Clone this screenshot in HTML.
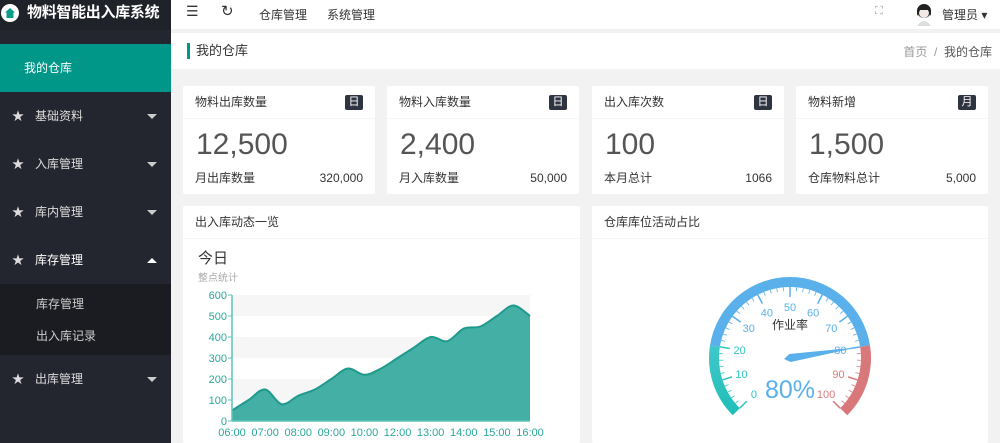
<!DOCTYPE html>
<html><head><meta charset="utf-8"><style>
*{margin:0;padding:0;box-sizing:border-box}
body{width:1000px;height:443px;overflow:hidden;background:#f2f2f2;font-family:"Liberation Sans","Noto Sans CJK SC",sans-serif;font-size:12px;color:#333;position:relative}
.side{position:absolute;left:0;top:0;width:171px;height:443px;background:#23262e}
.logo{height:30px;background:#20222a;color:#fff;font-size:15px;font-weight:bold;line-height:26px;padding-left:27px;position:relative;white-space:nowrap;letter-spacing:-0.3px}
.logo i{position:absolute;left:1px;top:4px;width:18px;height:18px;border-radius:50%;background:#fff}
.logo i:after{content:"";position:absolute;left:4px;top:4px;width:10px;height:10px;background:#0a9c86;clip-path:polygon(50% 0,100% 45%,85% 45%,85% 100%,15% 100%,15% 45%,0 45%)}
.act{position:absolute;top:44px;left:0;width:171px;height:48px;background:#009688;color:#fff;line-height:48px;padding-left:24px;font-size:12px}
.mi{position:absolute;left:0;width:171px;height:48px;line-height:48px;color:#ddd;padding-left:35px;font-size:12px}
.mi:before{content:"★";position:absolute;left:12px;font-size:12px;color:#ddd}
.mi:after{content:"";position:absolute;right:14px;top:22px;border:5px solid transparent;border-top:5px solid #ccc;border-bottom:0}
.mi.up{color:#fff}.mi.up:after{border-top:0;border-bottom:5px solid #fff}
.sub{position:absolute;left:0;top:284px;width:171px;height:71px;background:#1b1c22}
.sub div{height:32px;line-height:32px;padding-left:36px;color:#ccc}
.top{position:absolute;left:171px;top:0;right:0;height:30px;background:#fff;border-bottom:1px solid #f0f0f0}
.top span{position:absolute;top:6px;font-size:12px;color:#333}
.bc{position:absolute;left:171px;top:33px;right:0;height:36px;background:#fff}
.bc .t{position:absolute;left:16px;top:10px;border-left:3px solid #009688;padding-left:6px;font-size:13px;line-height:16px}
.bc .r{position:absolute;right:8px;top:10px;color:#999}
.card{position:absolute;background:#fff;border-radius:2px}
.card .h{height:33px;line-height:33px;padding-left:12px;border-bottom:1px solid #f6f6f6;color:#333;position:relative}
.card .b{position:absolute;right:12px;top:9px;width:18px;height:15px;background:#2f3540;color:#fff;font-size:11px;line-height:15px;text-align:center;border-radius:2px}
.num{position:absolute;left:13px;top:42px;font-size:30px;color:#555}
.ft{position:absolute;left:12px;right:12px;top:84px;font-size:12px;display:flex;justify-content:space-between;align-items:baseline;line-height:16px}
.ft b{font-weight:normal}
</style></head><body>
<div class="side">
<div class="logo"><i></i>物料智能出入库系统</div>
<div class="act">我的仓库</div>
<div class="mi" style="top:92px">基础资料</div>
<div class="mi" style="top:140px">入库管理</div>
<div class="mi" style="top:188px">库内管理</div>
<div class="mi up" style="top:236px">库存管理</div>
<div class="sub"><div style="margin-top:4px">库存管理</div><div>出入库记录</div></div>
<div class="mi" style="top:355px">出库管理</div>
</div>
<div class="top">
<span style="left:15px;top:3px;font-size:14px">☰</span>
<span style="left:50px;top:2px;font-size:15px">↻</span>
<span style="left:88px">仓库管理</span><span style="left:156px">系统管理</span>
<span style="left:704px;top:5px;color:#999;font-size:11px">⛶</span>
<svg style="position:absolute;left:742px;top:2px" width="22" height="24" viewBox="0 0 22 24"><circle cx="11" cy="9" r="7" fill="#222"/><ellipse cx="11" cy="11" rx="5" ry="5" fill="#f3e9e4"/><path d="M4 24 Q11 14 18 24Z" fill="#ddd"/><path d="M4 8 Q11 0 18 8 L18 14 L15 8 L7 8 L4 14Z" fill="#222"/></svg>
<span style="left:771px">管理员 ▾</span>
</div>
<div class="bc"><div class="t">我的仓库</div><div class="r">首页 &nbsp;/&nbsp; <span style="color:#555">我的仓库</span></div></div>

<div class="card" style="left:183px;top:86px;width:192px;height:108px"><div class="h">物料出库数量<span class="b">日</span></div><div class="num">12,500</div><div class="ft"><span>月出库数量</span><b>320,000</b></div></div>
<div class="card" style="left:387px;top:86px;width:192px;height:108px"><div class="h">物料入库数量<span class="b">日</span></div><div class="num">2,400</div><div class="ft"><span>月入库数量</span><b>50,000</b></div></div>
<div class="card" style="left:592px;top:86px;width:192px;height:108px"><div class="h">出入库次数<span class="b">日</span></div><div class="num">100</div><div class="ft"><span>本月总计</span><b>1066</b></div></div>
<div class="card" style="left:796px;top:86px;width:192px;height:108px"><div class="h">物料新增<span class="b">月</span></div><div class="num">1,500</div><div class="ft"><span>仓库物料总计</span><b>5,000</b></div></div>

<div class="card" style="left:183px;top:206px;width:397px;height:237px"><div class="h">出入库动态一览</div></div>
<div class="card" style="left:592px;top:206px;width:396px;height:237px"><div class="h">仓库库位活动占比</div></div>

<svg id="ch" style="position:absolute;left:0;top:0" width="1000" height="443">
<text x="198" y="263" font-size="15" fill="#333" font-family="Liberation Sans,Noto Sans CJK SC,sans-serif">今日</text>
<text x="198" y="281" font-size="10" fill="#aaa" font-family="Liberation Sans,Noto Sans CJK SC,sans-serif">整点统计</text>
<g id="cg"></g>
<g id="gg"></g>
</svg>
<script>
var ns="http://www.w3.org/2000/svg";
function el(p,t,a,txt){var e=document.createElementNS(ns,t);for(var k in a)e.setAttribute(k,a[k]);if(txt!=null)e.textContent=txt;p.appendChild(e);return e;}
var cg=document.getElementById("cg");
var x0=232,x1=530,y0=421,sc=0.21;
for(var i=0;i<6;i++){var ya=y0-(i+1)*100*sc;if(i%2==1)el(cg,"rect",{x:x0,y:ya,width:x1-x0,height:100*sc,fill:"#f6f6f6"});}
var v=[50,100,150,80,120,150,200,250,220,250,300,350,400,380,440,450,500,550,500];
var P=v.map(function(d,i){return [x0+i*(x1-x0)/18,y0-d*sc]});
var d="M"+P[0][0]+","+P[0][1];
for(var i=0;i<P.length-1;i++){var p0=P[Math.max(i-1,0)],p1=P[i],p2=P[i+1],p3=P[Math.min(i+2,P.length-1)];
d+=" C"+(p1[0]+(p2[0]-p0[0])/6)+","+(p1[1]+(p2[1]-p0[1])/6)+" "+(p2[0]-(p3[0]-p1[0])/6)+","+(p2[1]-(p3[1]-p1[1])/6)+" "+p2[0]+","+p2[1];}
el(cg,"path",{d:d+" L"+x1+","+y0+" L"+x0+","+y0+"Z",fill:"#3aab9f",opacity:"0.95"});
el(cg,"path",{d:d,fill:"none",stroke:"#1f9a8c","stroke-width":"2"});
el(cg,"line",{x1:x0,y1:295,x2:x0,y2:y0,stroke:"#5cc4b8","stroke-width":"1.5"});
el(cg,"line",{x1:x0,y1:y0,x2:x1,y2:y0,stroke:"#5cc4b8","stroke-width":"1.5"});
for(var i=0;i<=6;i++){var y=y0-i*100*sc;el(cg,"text",{x:227,y:y+4,"text-anchor":"end","font-size":"11",fill:"#2aa89a","font-family":"Liberation Sans,sans-serif"},String(i*100));el(cg,"line",{x1:228,y1:y,x2:x0,y2:y,stroke:"#5cc4b8"});}
var L=["06:00","07:00","08:00","09:00","10:00","12:00","13:00","14:00","15:00","16:00"];
L.forEach(function(t,i){el(cg,"text",{x:x0+i*(x1-x0)/9,y:436,"text-anchor":"middle","font-size":"11",fill:"#2aa89a","font-family":"Liberation Sans,sans-serif"},t)});
var gg=document.getElementById("gg");var cx=790,cy=358,R=81,W=10;
el(gg,"defs",{}).innerHTML='<linearGradient id="tg" x1="0" y1="1" x2="0" y2="0"><stop offset="0" stop-color="#1fbfb8"/><stop offset="1" stop-color="#41c7c9"/></linearGradient>';
function ang(val){return (225-val*2.7)*Math.PI/180}
function pt(a,r){return [cx+r*Math.cos(a),cy-r*Math.sin(a)]}
function arc(a,b,col){var r=R-W/2,p=pt(ang(a),r),q=pt(ang(b),r);el(gg,"path",{d:"M"+p+" A"+r+","+r+" 0 "+((b-a)*2.7>180?1:0)+",1 "+q,fill:"none",stroke:col,"stroke-width":W});}
arc(0,20,"url(#tg)");arc(20,80,"#5ab0ea");arc(80,100,"#d9787b");
function col(v){return v<=20?"#2ec4c0":(v<=80?"#5ab0ea":"#d9787b")}
for(var v2=0;v2<=100;v2+=2){var a=ang(v2),big=v2%10==0;var p=pt(a,R-W),q=pt(a,R-W-(big?10:4));el(gg,"line",{x1:p[0],y1:p[1],x2:q[0],y2:q[1],stroke:col(v2),"stroke-width":big?1.5:0.8});
if(big){var t=pt(a,R-W-20);el(gg,"text",{x:t[0],y:t[1]+4,"text-anchor":"middle","font-size":"11",fill:col(v2),"font-family":"Liberation Sans,sans-serif"},String(v2));}}
el(gg,"text",{x:cx,y:329,"text-anchor":"middle","font-size":"12",fill:"#333","font-family":"Liberation Sans,Noto Sans CJK SC,sans-serif"},"作业率");
el(gg,"text",{x:cx,y:398,"text-anchor":"middle","font-size":"25",fill:"#5ab0ea","font-family":"Liberation Sans,sans-serif"},"80%");
var a=ang(80),tip=pt(a,R-W-2),l=pt(a+Math.PI/2,4),r2=pt(a-Math.PI/2,4),bk=pt(a+Math.PI,6);
el(gg,"path",{d:"M"+tip+" L"+l+" L"+bk+" L"+r2+"Z",fill:"#5ab0ea"});
</script>
</body></html>
